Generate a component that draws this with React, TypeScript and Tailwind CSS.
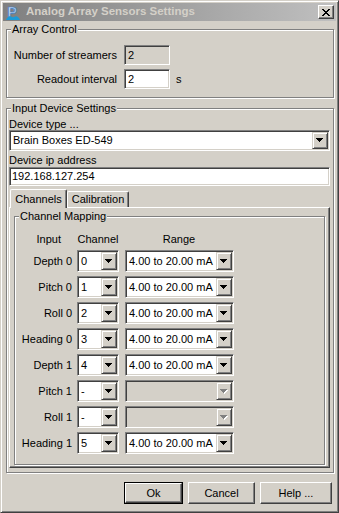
import React from "react";

const sunken =
  "border border-t-[#808080] border-l-[#808080] border-b-white border-r-white shadow-[inset_1px_1px_0_#404040,inset_-1px_-1px_0_#d4d0c8]";

function Tri({ color }: { color: string }) {
  return (
    <>
      <rect x="0" y="0" width="7" height="1" fill={color} />
      <rect x="1" y="1" width="5" height="1" fill={color} />
      <rect x="2" y="2" width="3" height="1" fill={color} />
      <rect x="3" y="3" width="1" height="1" fill={color} />
    </>
  );
}

function Arrow({ disabled }: { disabled?: boolean }) {
  return (
    <div className="flex h-full w-[16px] shrink-0 items-center justify-center border border-t-[#d4d0c8] border-l-[#d4d0c8] border-b-[#404040] border-r-[#404040] bg-[#d4d0c8] shadow-[inset_1px_1px_0_#fff,inset_-1px_-1px_0_#808080]">
      <svg width="8" height="5" viewBox="0 0 8 5" shapeRendering="crispEdges">
        {disabled ? (
          <>
            <g transform="translate(1,1)">
              <Tri color="#ffffff" />
            </g>
            <Tri color="#808080" />
          </>
        ) : (
          <Tri color="#000000" />
        )}
      </svg>
    </div>
  );
}

function Combo({
  value,
  className,
  disabled,
}: {
  value: string;
  className: string;
  disabled?: boolean;
}) {
  return (
    <div
      className={`flex p-[1px] ${sunken} ${disabled ? "bg-[#d4d0c8]" : "bg-white"} ${className}`}
    >
      <div className="flex flex-1 items-center overflow-hidden whitespace-nowrap pl-[2px]">
        {value}
      </div>
      <Arrow disabled={disabled} />
    </div>
  );
}

function Group({
  label,
  className,
  children,
}: {
  label: string;
  className: string;
  children: React.ReactNode;
}) {
  return (
    <div
      className={`relative border border-[#808080] shadow-[inset_1px_1px_0_#fff,1px_1px_0_#fff] ${className}`}
    >
      <span className="absolute left-[4px] top-[-7px] bg-[#d4d0c8] px-[1px] leading-[13px]">
        {label}
      </span>
      {children}
    </div>
  );
}

function Button({
  label,
  className,
  def,
}: {
  label: string;
  className: string;
  def?: boolean;
}) {
  if (def) {
    return (
      <div className={`h-[22px] border border-black ${className}`}>
        <div className="flex h-full items-center justify-center border border-t-white border-l-white border-b-[#404040] border-r-[#404040] shadow-[inset_-1px_-1px_0_#808080]">
          {label}
        </div>
      </div>
    );
  }
  return (
    <div
      className={`flex h-[22px] items-center justify-center border border-t-white border-l-white border-b-[#404040] border-r-[#404040] shadow-[inset_-1px_-1px_0_#808080] ${className}`}
    >
      {label}
    </div>
  );
}

const rows: { label: string; ch: string; range: string; disabled?: boolean }[] = [
  { label: "Depth 0", ch: "0", range: "4.00 to 20.00 mA" },
  { label: "Pitch 0", ch: "1", range: "4.00 to 20.00 mA" },
  { label: "Roll 0", ch: "2", range: "4.00 to 20.00 mA" },
  { label: "Heading 0", ch: "3", range: "4.00 to 20.00 mA" },
  { label: "Depth 1", ch: "4", range: "4.00 to 20.00 mA" },
  { label: "Pitch 1", ch: "-", range: "", disabled: true },
  { label: "Roll 1", ch: "-", range: "", disabled: true },
  { label: "Heading 1", ch: "5", range: "4.00 to 20.00 mA" },
];

export default function App() {
  return (
    <div className="flex h-[513px] w-[339px] flex-col border border-t-[#d4d0c8] border-l-[#d4d0c8] border-b-[#404040] border-r-[#404040] bg-[#d4d0c8] p-[2px] font-['Liberation_Sans',Arial,sans-serif] text-[11px] text-black shadow-[inset_1px_1px_0_#fff,inset_-1px_-1px_0_#808080]">
      {/* Title bar */}
      <div className="flex h-[18px] shrink-0 items-center bg-gradient-to-r from-[#808080] to-[#c0c0c0]">
        <svg width="16" height="16" viewBox="0 0 16 16" className="ml-[2px] shrink-0">
          <defs>
            <linearGradient id="g1" x1="0" y1="0" x2="1" y2="1">
              <stop offset="0" stopColor="#eaf2fa" />
              <stop offset="1" stopColor="#7aa7d6" />
            </linearGradient>
          </defs>
          <text
            x="2.5"
            y="12.5"
            fontSize="14"
            fontWeight="bold"
            fill="url(#g1)"
            stroke="#3a78c0"
            strokeWidth="0.6"
            fontFamily="Liberation Sans, Arial, sans-serif"
          >
            P
          </text>
          <path d="M1 16 Q3 11.5 6 12.5 Q8 14 10 12.5 Q13 11.5 15 16 Z" fill="#1c9ad6" />
        </svg>
        <span className="ml-[5px] text-[11.5px] font-bold leading-none text-[#d4d0c8]">
          Analog Array Sensors Settings
        </span>
        <div className="ml-auto mr-[2px] flex h-[14px] w-[16px] items-center justify-center border border-t-white border-l-white border-b-[#404040] border-r-[#404040] bg-[#d4d0c8] shadow-[inset_-1px_-1px_0_#808080]">
          <svg width="8" height="7" viewBox="0 0 8 7" shapeRendering="crispEdges">
            <path d="M0 0h2v1h-2zM6 0h2v1h-2zM1 1h2v1h-2zM5 1h2v1h-2zM2 2h4v1h-4zM3 3h2v1h-2zM2 4h4v1h-4zM1 5h2v1h-2zM5 5h2v1h-2zM0 6h2v1h-2zM6 6h2v1h-2z" fill="#000" />
          </svg>
        </div>
      </div>

      {/* Array Control */}
      <Group label="Array Control" className="ml-[3px] mt-[8px] w-[328px] pb-[8px] pt-[15px]">
        <div className="flex items-center">
          <div className="w-[110px] text-right">Number of streamers</div>
          <div className={`ml-[7px] flex h-[20px] w-[46px] items-center bg-[#d4d0c8] pl-[3px] ${sunken}`}>
            2
          </div>
        </div>
        <div className="mt-[4px] flex items-center">
          <div className="w-[110px] text-right">Readout interval</div>
          <div className={`ml-[7px] flex h-[20px] w-[46px] items-center bg-white pl-[3px] ${sunken}`}>
            2
          </div>
          <div className="ml-[6px]">s</div>
        </div>
      </Group>

      {/* Input Device Settings */}
      <Group
        label="Input Device Settings"
        className="ml-[3px] mt-[10px] w-[328px] pb-[4px] pl-[2px] pr-[3px] pt-[9px]"
      >
        <div className="h-[12px] leading-[12px]">Device type ...</div>
        <Combo value="Brain Boxes ED-549" className="h-[21px]" />
        <div className="mt-[3px] h-[12px] leading-[12px]">Device ip address</div>
        <div className={`mt-[1px] flex h-[19px] items-center bg-white pl-[2px] ${sunken}`}>
          192.168.127.254
        </div>

        {/* Tabs */}
        <div className="mt-[3px] flex h-[18px] items-end pl-[1px]">
          <div className="relative z-10 mb-[-1px] flex h-[19px] w-[57px] items-start justify-center rounded-t-[2px] border-l border-t border-l-white border-t-white border-r border-r-[#404040] bg-[#d4d0c8] pt-[1px] shadow-[inset_-1px_0_0_#808080]">
            Channels
          </div>
          <div className="flex h-[16px] w-[62px] items-center justify-center rounded-t-[2px] border-l border-t border-l-white border-t-white border-r border-r-[#404040] bg-[#d4d0c8] shadow-[inset_-1px_0_0_#808080]">
            Calibration
          </div>
        </div>
        <div className="border border-t-white border-l-white border-b-[#404040] border-r-[#404040] pb-[2px] pl-[4px] pr-[4px] pt-[8px] shadow-[inset_-1px_-1px_0_#808080]">
          <Group label="Channel Mapping" className="w-[311px] pb-[10px] pt-[16px]">
            <div className="grid grid-cols-[57px_42px_109px] gap-x-[5px] gap-y-[4px] [&>*:nth-child(3n)]:ml-[1px]">
              <div className="h-[13px] pr-[11px] text-right leading-[13px]">Input</div>
              <div className="h-[13px] text-center leading-[13px]">Channel</div>
              <div className="h-[13px] text-center leading-[13px]">Range</div>
              {rows.map((r) => (
                <React.Fragment key={r.label}>
                  <div className="flex h-[22px] items-center justify-end whitespace-nowrap">
                    {r.label}
                  </div>
                  <Combo value={r.ch} className="h-[22px] w-[42px]" />
                  <Combo value={r.range} className="h-[22px] w-[109px]" disabled={r.disabled} />
                </React.Fragment>
              ))}
            </div>
          </Group>
        </div>
      </Group>

      {/* Buttons */}
      <div className="mt-[9px] flex justify-end pr-[4px]">
        <Button label="Ok" className="w-[59px]" def />
        <Button label="Cancel" className="ml-[5px] w-[67px]" />
        <Button label="Help ..." className="ml-[5px] w-[72px]" />
      </div>
    </div>
  );
}
